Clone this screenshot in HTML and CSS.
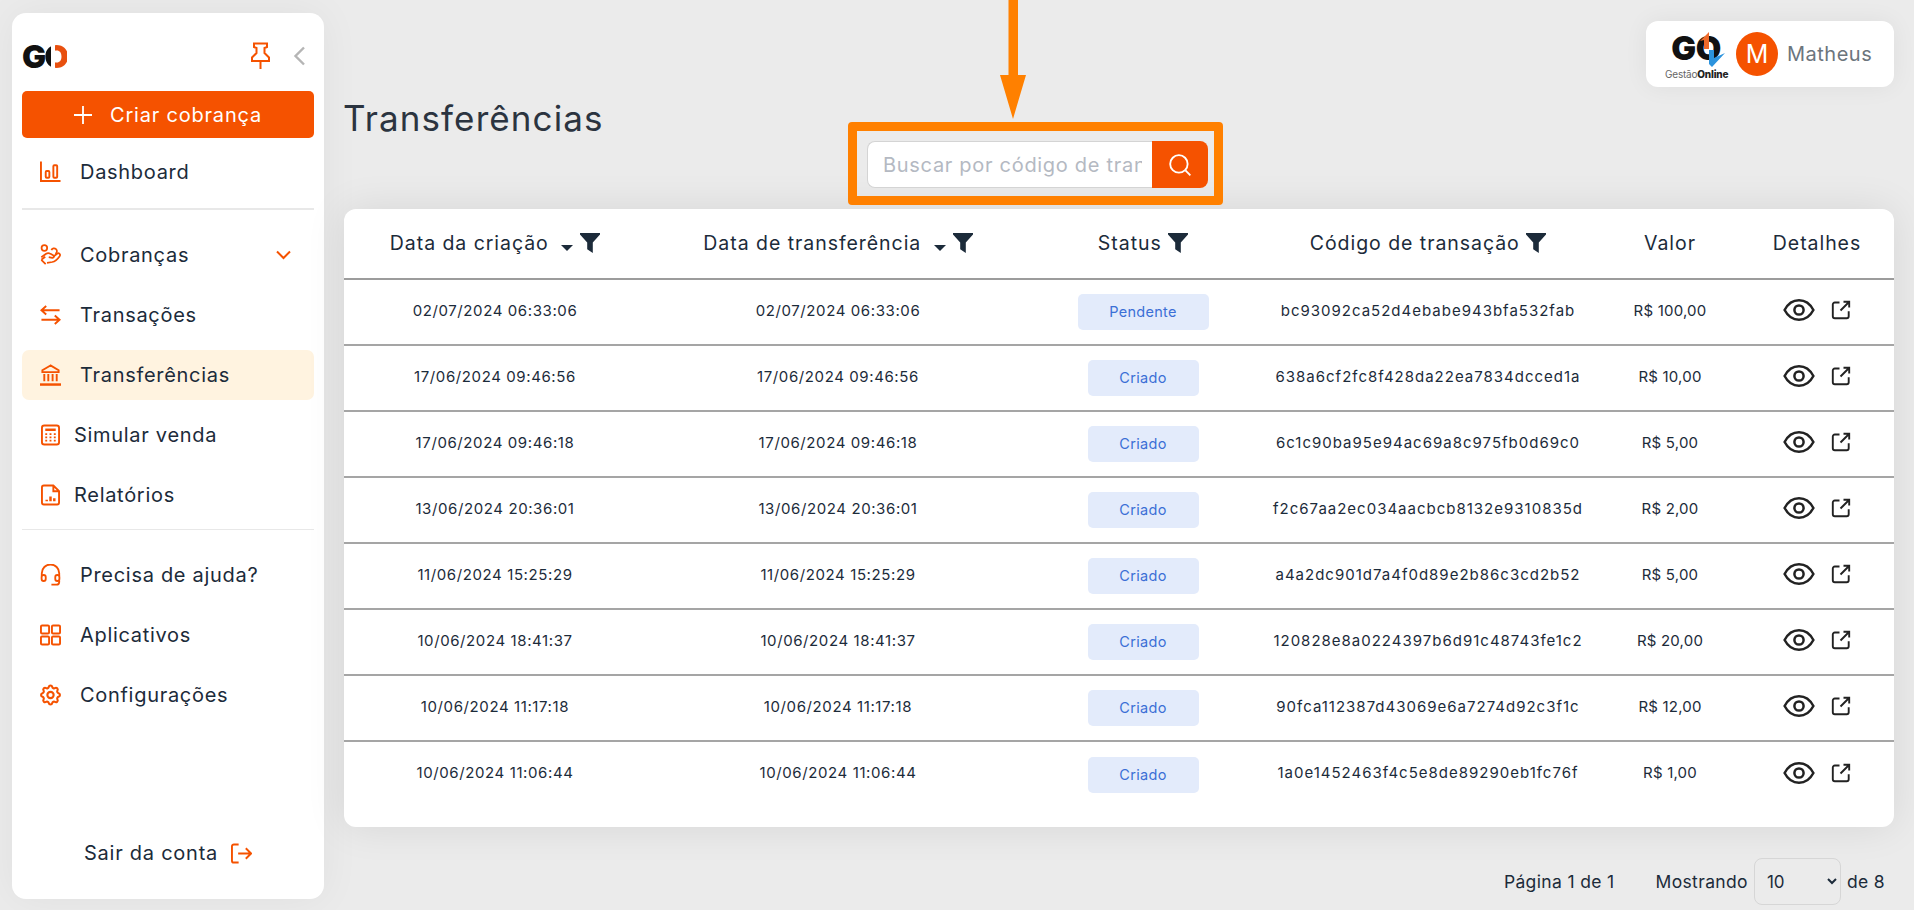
FILE: index.html
```html
<!DOCTYPE html>
<html lang="pt-BR">
<head>
    <meta charset="UTF-8">
    <title>Transferências</title>
    <link rel="stylesheet" href="styles.css">
</head>
<body>

<svg class="sprite" width="0" height="0">
    <symbol id="i-eye" viewBox="0 0 32 24"><path d="M1.6 12C5 5.5 10 2.2 16 2.2S27 5.500 30.400 12C27 18.500 22 21.800 16 21.800S5 18.500 1.600 12z"/><circle cx="16" cy="12" r="4.600"/></symbol>
    <symbol id="i-open" viewBox="0 0 20 20"><path d="M8.500 2.500H3.800a2 2 0 0 0-2 2v11.700a2 2 0 0 0 2 2h11.900a2 2 0 0 0 2-2v-5"/><path d="M9.500 10.500 18 2M12.500 1.800H18.200V7.500"/></symbol>
    <symbol id="i-funnel" viewBox="0 0 20 20"><path d="M0 0h20v1.500L12.800 9.500V20l-5.600-3.800V9.500L0 1.500z"/></symbol>
</svg>

<aside class="sidebar">
    <div class="sidebar-top">
        <div class="logo">G<span class="logo-o">O</span></div>
        <svg class="pin" viewBox="0 0 20 28"><path d="M3.500 1.500h13v3.500l-2.500 1v5l4.500 4.500v3.500H1.500V15.500L6 11V6L3.500 5zM10 19v8"/></svg>
        <svg class="collapse" viewBox="0 0 12 20"><path d="M10.500 1.500 2 10l8.500 8.500"/></svg>
    </div>

    <button class="create-btn" type="button">
        <svg viewBox="0 0 18 18"><path d="M9 0v18M0 9h18"/></svg>
        Criar cobrança
    </button>

    <nav class="nav">
        <a class="nav-item">
            <svg class="nav-icon" viewBox="0 0 22 22"><path d="M1 0v20.500h20.500"/><rect x="6" y="10" width="3.800" height="7" rx="1"/><rect x="14" y="4" width="4" height="13" rx="1"/></svg>
            Dashboard
        </a>
        <div class="nav-sep nav-sep-first"></div>
        <a class="nav-item">
            <svg class="nav-icon" viewBox="0 0 24 24"><circle cx="5" cy="4" r="3.200"/><path d="M13 6.500a3.300 3.300 0 1 1 4.500 4.200"/><path d="M1.500 14.500 7 10.500c2-1.200 3.500-.8 5 .2l3 1.500c1.800 1 .8 3.300-1 3l-4-.8"/><path d="M15 14l4.500-3.500c2.200-1.500 4.300.8 3 2.800-2.500 3.500-5 6-8.500 6.700L8 21"/><path d="M1.500 17.500 6 14M1.500 17.500l5 5"/></svg>
            Cobranças
            <svg class="nav-caret" viewBox="0 0 16 10"><path d="M1.500 1.500 8 8l6.500-6.500"/></svg>
        </a>
        <a class="nav-item">
            <svg class="nav-icon" viewBox="0 0 22 22"><path d="M6.500 1.500 1.500 6l5 4.500M1.500 6h19M15.500 11.500l5 4.500-5 4.500M20.500 16h-19"/></svg>
            Transações
        </a>
        <a class="nav-item active">
            <svg class="nav-icon" viewBox="0 0 22 22"><path d="M11 1 2.500 6v2h17V6z"/><path d="M4.500 10v7.500M8.700 10v7.500M13.200 10v7.500M17.500 10v7.500"/><path class="thick" d="M0 21h22"/></svg>
            Transferências
        </a>
        <a class="nav-item nav-item-tight">
            <svg class="nav-icon" viewBox="0 0 20 22"><rect x="1" y="1" width="18" height="20" rx="2.500"/><path class="thick" d="M4.500 5.500h11"/><path class="dots" d="M4.500 10h2M9 10h2M13.500 10h2M4.500 13.500h2M9 13.500h2M13.500 13.500h2M4.500 17h2M9 17h2M13.500 17h2"/></svg>
            Simular venda
        </a>
        <a class="nav-item nav-item-tight">
            <svg class="nav-icon" viewBox="0 0 20 22"><path d="M13 1H3a2 2 0 0 0-2 2v16a2 2 0 0 0 2 2h14a2 2 0 0 0 2-2V7zM13 1v6h6"/><path class="thick" d="M6 17.500v-1.500M10 17.500v-5M14 17.500v-3"/></svg>
            Relatórios
        </a>
        <div class="nav-sep"></div>
        <a class="nav-item">
            <svg class="nav-icon" viewBox="0 0 22 24"><path d="M1.500 13v-3a9.500 9.500 0 0 1 19 0v3"/><rect x="1.300" y="12" width="4.500" height="6.500" rx="2.200"/><rect x="16.200" y="12" width="4.500" height="6.500" rx="2.200"/><path d="M20.500 18v1.500a3 3 0 0 1-3 3H12"/></svg>
            Precisa de ajuda?
        </a>
        <a class="nav-item">
            <svg class="nav-icon" viewBox="0 0 22 22"><rect x="1" y="1" width="8.500" height="8.500" rx="1.200"/><rect x="12.500" y="1" width="8.500" height="8.500" rx="1.200"/><rect x="1" y="12.500" width="8.500" height="8.500" rx="1.200"/><rect x="12.500" y="12.500" width="8.500" height="8.500" rx="1.200"/></svg>
            Aplicativos
        </a>
        <a class="nav-item">
            <svg class="nav-icon" viewBox="2 2 20 20"><path d="M10.325 4.317c.426-1.756 2.924-1.756 3.350 0a1.724 1.724 0 0 0 2.573 1.066c1.543-.94 3.310.826 2.370 2.370a1.724 1.724 0 0 0 1.065 2.572c1.756.426 1.756 2.924 0 3.350a1.724 1.724 0 0 0-1.066 2.573c.94 1.543-.826 3.310-2.370 2.370a1.724 1.724 0 0 0-2.572 1.065c-.426 1.756-2.924 1.756-3.350 0a1.724 1.724 0 0 0-2.573-1.066c-1.543.94-3.310-.826-2.370-2.370a1.724 1.724 0 0 0-1.065-2.572c-1.756-.426-1.756-2.924 0-3.350a1.724 1.724 0 0 0 1.066-2.573c-.94-1.543.826-3.310 2.370-2.370 1 .608 2.296.07 2.572-1.065z"/><circle cx="12" cy="12" r="3"/></svg>
            Configurações
        </a>
    </nav>

    <a class="logout">
        Sair da conta
        <svg viewBox="0 0 22 22"><path d="M8 1.500H3a2 2 0 0 0-2 2v15a2 2 0 0 0 2 2h5M7.500 11h13.500M15.500 5.500 21 11l-5.500 5.500"/></svg>
    </a>
</aside>

<main class="main">
    <div class="topbar">
        <div class="user-card">
            <div class="brand">
                <div class="brand-go">GO</div>
                <div class="brand-name">Gestão<b>Online</b></div>
                <svg class="brand-arrows" viewBox="0 0 62 44">
                    <polygon class="arrow-up" points="35,9 44,0 44,17 39,17 39,8"/>
                    <polygon class="arrow-down" points="44,18 49,18 49,26 60,21 47,35 44,32"/>
                </svg>
            </div>
            <div class="avatar">M</div>
            <span class="user-name">Matheus</span>
        </div>
    </div>

    <div class="title-row">
        <h1>Transferências</h1>
        <form class="search-box">
            <input type="text" placeholder="Buscar por código de transação">
            <button type="button">
                <svg viewBox="0 0 22 22"><circle cx="10" cy="10" r="8"/><path d="m16 16 4.500 4.500"/></svg>
            </button>
        </form>
    </div>

    <svg class="arrow" viewBox="0 0 28 119"><path d="M9.500 0h9.500v75h8L14 119 1 75h8.500z"/></svg>

    <section class="table-card">
        <table>
            <colgroup>
                <col class="col-1"><col class="col-2"><col class="col-3"><col class="col-4"><col class="col-5"><col class="col-6">
            </colgroup>
            <thead>
                <tr>
                    <th>Data da criação <span class="sort"></span><svg class="funnel"><use href="#i-funnel"/></svg></th>
                    <th>Data de transferência <span class="sort"></span><svg class="funnel"><use href="#i-funnel"/></svg></th>
                    <th>Status <svg class="funnel"><use href="#i-funnel"/></svg></th>
                    <th>Código de transação <svg class="funnel"><use href="#i-funnel"/></svg></th>
                    <th>Valor</th>
                    <th>Detalhes</th>
                </tr>
            </thead>
            <tbody>
                <tr>
                    <td>02/07/2024 06:33:06</td><td>02/07/2024 06:33:06</td>
                    <td><span class="badge badge-wide">Pendente</span></td>
                    <td>bc93092ca52d4ebabe943bfa532fab</td><td>R$ 100,00</td>
                    <td class="actions"><svg class="eye"><use href="#i-eye"/></svg><svg class="open"><use href="#i-open"/></svg></td>
                </tr>
                <tr>
                    <td>17/06/2024 09:46:56</td><td>17/06/2024 09:46:56</td>
                    <td><span class="badge">Criado</span></td>
                    <td>638a6cf2fc8f428da22ea7834dcced1a</td><td>R$ 10,00</td>
                    <td class="actions"><svg class="eye"><use href="#i-eye"/></svg><svg class="open"><use href="#i-open"/></svg></td>
                </tr>
                <tr>
                    <td>17/06/2024 09:46:18</td><td>17/06/2024 09:46:18</td>
                    <td><span class="badge">Criado</span></td>
                    <td>6c1c90ba95e94ac69a8c975fb0d69c0</td><td>R$ 5,00</td>
                    <td class="actions"><svg class="eye"><use href="#i-eye"/></svg><svg class="open"><use href="#i-open"/></svg></td>
                </tr>
                <tr>
                    <td>13/06/2024 20:36:01</td><td>13/06/2024 20:36:01</td>
                    <td><span class="badge">Criado</span></td>
                    <td>f2c67aa2ec034aacbcb8132e9310835d</td><td>R$ 2,00</td>
                    <td class="actions"><svg class="eye"><use href="#i-eye"/></svg><svg class="open"><use href="#i-open"/></svg></td>
                </tr>
                <tr>
                    <td>11/06/2024 15:25:29</td><td>11/06/2024 15:25:29</td>
                    <td><span class="badge">Criado</span></td>
                    <td>a4a2dc901d7a4f0d89e2b86c3cd2b52</td><td>R$ 5,00</td>
                    <td class="actions"><svg class="eye"><use href="#i-eye"/></svg><svg class="open"><use href="#i-open"/></svg></td>
                </tr>
                <tr>
                    <td>10/06/2024 18:41:37</td><td>10/06/2024 18:41:37</td>
                    <td><span class="badge">Criado</span></td>
                    <td>120828e8a0224397b6d91c48743fe1c2</td><td>R$ 20,00</td>
                    <td class="actions"><svg class="eye"><use href="#i-eye"/></svg><svg class="open"><use href="#i-open"/></svg></td>
                </tr>
                <tr>
                    <td>10/06/2024 11:17:18</td><td>10/06/2024 11:17:18</td>
                    <td><span class="badge">Criado</span></td>
                    <td>90fca112387d43069e6a7274d92c3f1c</td><td>R$ 12,00</td>
                    <td class="actions"><svg class="eye"><use href="#i-eye"/></svg><svg class="open"><use href="#i-open"/></svg></td>
                </tr>
                <tr>
                    <td>10/06/2024 11:06:44</td><td>10/06/2024 11:06:44</td>
                    <td><span class="badge">Criado</span></td>
                    <td>1a0e1452463f4c5e8de89290eb1fc76f</td><td>R$ 1,00</td>
                    <td class="actions"><svg class="eye"><use href="#i-eye"/></svg><svg class="open"><use href="#i-open"/></svg></td>
                </tr>
            </tbody>
        </table>
    </section>

    <div class="pager">
        <span class="page-info">Página 1 de 1</span>
        <span>Mostrando</span>
        <select class="page-size"><option>10</option></select>
        <span>de 8</span>
    </div>
</main>

</body>
</html>
```

FILE: styles.css
```css
* {
    box-sizing: border-box;
}
html, body {
    height: 100%;
}
body {
    margin: 0;
    display: flex;
    overflow: hidden;
    font-family: Inter, "Noto Sans", sans-serif;
    color: #1c2b3a;
    background-color: #ebebeb;
}
svg {
    fill: none;
    stroke: currentColor;
    flex-shrink: 0;
}
.sprite {
    position: absolute;
}

/* sidebar */
.sidebar {
    width: 312px;
    height: 886px;
    margin: 13px 0 0 12px;
    padding: 0 10px 21px;
    display: flex;
    flex-direction: column;
    flex-shrink: 0;
    background-color: #fff;
    border-radius: 14px;
    box-shadow: 0 0 40px rgba(0, 0, 0, 0.05);
}
.sidebar-top {
    height: 78px;
    display: flex;
    align-items: center;
    padding-top: 8px;
}
.logo {
    font-size: 32px;
    font-weight: 900;
    letter-spacing: -2px;
    color: #111;
}
.logo-o {
    background: linear-gradient(90deg, #111 30%, #fff 30%, #fff 46%, #e8500f 46%);
    -webkit-background-clip: text;
    background-clip: text;
    color: transparent;
}
.pin {
    width: 21px;
    height: 28px;
    margin-left: auto;
    color: #f55200;
    stroke-width: 2;
}
.collapse {
    width: 13px;
    height: 20px;
    margin: 0 8px 0 22px;
    color: #b5b5b5;
    stroke-width: 2.400;
}
.create-btn {
    height: 47px;
    display: flex;
    align-items: center;
    justify-content: center;
    gap: 18px;
    padding: 0;
    border: none;
    border-radius: 5px;
    background-color: #f55200;
    color: #fff;
    font-family: inherit;
    font-size: 20px;
    letter-spacing: 0.800px;
}
.create-btn svg {
    width: 18px;
    height: 18px;
    stroke-width: 1.800;
}
.nav {
    display: flex;
    flex-direction: column;
    gap: 10px;
    margin-top: 9px;
}
.nav-item {
    height: 50px;
    display: flex;
    align-items: center;
    gap: 19px;
    padding: 0 22px 0 18px;
    border-radius: 7px;
    font-size: 20px;
    letter-spacing: 0.700px;
}
.nav-item.active {
    background-color: #fff3e0;
}
.nav-item-tight {
    gap: 14px;
    padding-left: 19px;
}
.nav-item-tight .nav-icon {
    width: 19px;
}
.nav-icon {
    width: 21px;
    height: 22px;
    color: #f55200;
    stroke-width: 2;
}
.nav-icon .thick {
    stroke-width: 2.600;
}
.nav-icon .dots {
    stroke-width: 1.800;
}
.nav-caret {
    width: 17px;
    height: 10px;
    margin-left: auto;
    color: #f55200;
    stroke-width: 2;
}
.nav-sep {
    height: 1px;
    margin: -1px 0 10px;
    background-color: #e8e8e8;
}
.nav-sep-first {
    height: 2px;
    margin: 1px 0 10px;
}
.logout {
    height: 50px;
    margin-top: auto;
    display: flex;
    align-items: center;
    justify-content: center;
    gap: 13px;
    font-size: 20px;
    letter-spacing: 0.750px;
}
.logout svg {
    width: 21px;
    height: 21px;
    color: #f55200;
    stroke-width: 2;
}

/* main column */
.main {
    position: relative;
    flex: 1;
    min-width: 0;
    padding: 21px 20px 0;
}
.topbar {
    display: flex;
    justify-content: flex-end;
}
.user-card {
    width: 248px;
    height: 66px;
    display: flex;
    align-items: center;
    padding-left: 19px;
    background-color: #fff;
    border-radius: 12px;
    box-shadow: 0 0 24px rgba(0, 0, 0, 0.06);
}
.brand {
    position: relative;
    width: 62px;
    text-align: center;
}
.brand-go {
    font-size: 33px;
    font-weight: 900;
    letter-spacing: -0.500px;
    line-height: 40px;
    color: #111;
}
.brand-name {
    font-size: 10px;
    line-height: 12px;
    letter-spacing: -0.200px;
    white-space: nowrap;
    color: #666;
}
.brand-name b {
    font-weight: 800;
    color: #222;
}
.brand-arrows {
    position: absolute;
    top: 4px;
    left: 0;
    width: 62px;
    height: 44px;
    stroke: none;
}
.arrow-up {
    fill: #ef6a2a;
}
.arrow-down {
    fill: #2c93dd;
}
.avatar {
    width: 42px;
    height: 44px;
    margin-left: 9px;
    display: flex;
    align-items: center;
    justify-content: center;
    border-radius: 50%;
    background-color: #f55200;
    color: #fff;
    font-size: 25px;
}
.user-name {
    margin-left: 9px;
    font-size: 20px;
    letter-spacing: 0.500px;
    color: #6c757d;
}
.title-row {
    height: 122px;
    display: flex;
    align-items: flex-start;
}
h1 {
    width: 504px;
    margin: 10px 0 0 -1px;
    font-size: 35px;
    font-weight: 400;
    line-height: 42px;
    letter-spacing: 1.100px;
    color: #2b3440;
}
.search-box {
    width: 375px;
    height: 83px;
    margin: 35px 0 0 1px;
    display: flex;
    padding: 10px 6px 8px 10px;
    border: 9px solid #ff8000;
    border-radius: 4px;
}
.search-box input {
    width: 285px;
    height: 47px;
    padding: 0 10px 0 15px;
    border: 1px solid #d4d4d4;
    border-right: none;
    border-radius: 8px 0 0 8px;
    font-family: inherit;
    font-size: 20px;
    letter-spacing: 0.700px;
    outline: none;
}
.search-box input::placeholder {
    color: #b4b9c2;
}
.search-box button {
    width: 57px;
    height: 47px;
    display: flex;
    align-items: center;
    justify-content: center;
    border: none;
    border-radius: 0 8px 8px 0;
    background-color: #f55200;
    color: #fff;
}
.search-box button svg {
    width: 24px;
    height: 24px;
    stroke-width: 1.700;
}
.arrow {
    position: absolute;
    top: 0;
    left: 675px;
    width: 28px;
    height: 119px;
    fill: #ff8000;
    stroke: none;
}

/* table */
.table-card {
    height: 618px;
    background-color: #fff;
    border-radius: 12px;
    box-shadow: 0 0 40px rgba(0, 0, 0, 0.09);
}
table {
    width: 100%;
    table-layout: fixed;
    border-collapse: collapse;
}
.col-1 { width: 302px; }
.col-2 { width: 384px; }
.col-3 { width: 226px; }
.col-4 { width: 344px; }
.col-5 { width: 140px; }
.col-6 { width: 154px; }
th {
    height: 70px;
    padding: 0 0 2px;
    border-bottom: 2px solid #9c9c9c;
    font-size: 19.500px;
    font-weight: 400;
    letter-spacing: 0.950px;
    text-align: center;
    white-space: nowrap;
}
td {
    height: 66px;
    padding: 0 0 4px;
    border-bottom: 2px solid #a5a5a5;
    font-size: 15px;
    letter-spacing: 0.600px;
    text-align: center;
    white-space: nowrap;
}
td:nth-child(4) {
    letter-spacing: 1px;
}
td:nth-child(5) {
    letter-spacing: 0.200px;
}
tbody tr:last-child td {
    border-bottom: none;
}
.funnel {
    width: 20px;
    height: 20px;
    vertical-align: -3px;
    fill: #1c2b3a;
    stroke: none;
}
.sort {
    display: inline-block;
    width: 0;
    height: 0;
    margin: 0 7px 0 6px;
    vertical-align: -1px;
    border-style: solid;
    border-width: 6px 6px 0;
    border-color: #1c2b3a transparent transparent;
}
.badge {
    display: inline-block;
    width: 111px;
    height: 36px;
    margin-top: 4px;
    border-radius: 5px;
    background-color: #e3ebfb;
    color: #3b6fd6;
    font-size: 14.500px;
    line-height: 36px;
    letter-spacing: 0.300px;
}
.badge-wide {
    width: 131px;
}
.actions svg {
    vertical-align: middle;
}
.eye {
    width: 32px;
    height: 24px;
    color: #222;
    stroke-width: 2.500;
}
.open {
    width: 20px;
    height: 20px;
    margin-left: 16px;
    color: #222;
    stroke-width: 1.900;
}

/* pagination */
.pager {
    margin-top: 31px;
    padding-right: 9px;
    display: flex;
    align-items: center;
    justify-content: flex-end;
    gap: 6px;
    font-size: 17.500px;
    letter-spacing: 0.350px;
}
.page-info {
    margin-right: 35px;
}
.page-size {
    width: 87px;
    height: 47px;
    padding-left: 8px;
    border: 1px solid #d6d6d6;
    border-radius: 8px;
    background-color: transparent;
    color: inherit;
    font-family: inherit;
    font-size: 17px;
}
```
